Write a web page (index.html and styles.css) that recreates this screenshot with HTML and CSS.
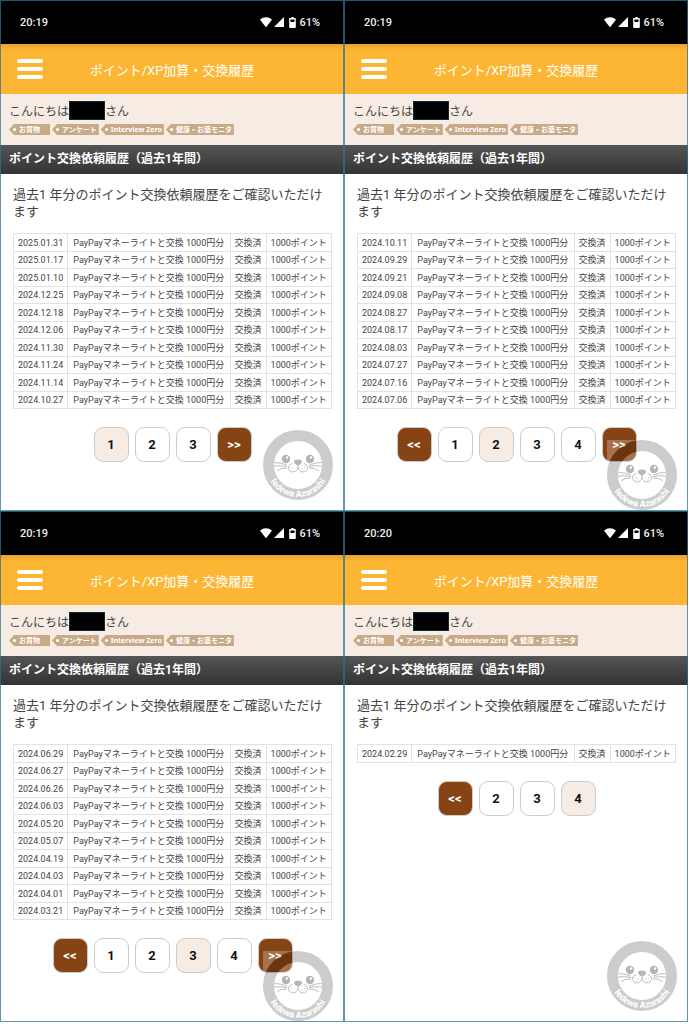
FILE: index.html
```html
<!DOCTYPE html>
<html lang="ja">
<head>
  <meta charset="UTF-8">
  <meta name="viewport" content="width=device-width, initial-scale=1.0">
  <title>ポイント/XP加算・交換履歴</title>
  <link rel="stylesheet" href="styles.css">
</head>
<body>
  <main class="screens" id="screens"></main>

  <template id="screenTemplate">
    <section class="screen">
      <div class="status">
        <span class="time"></span>
        <span class="indicators">
          <svg width="12" height="10" viewBox="0 0 12 10"><path d="M0 2.6C3.4-.7 8.600-.7 12 2.600L6.700 9.500Q6 10.300 5.300 9.500Z" fill="#fff"/></svg>
          <svg width="10" height="10" viewBox="0 0 10 10"><path d="M10 0V10H0Z" fill="#fff"/></svg>
          <svg class="battery" width="7" height="11" viewBox="0 0 6 10"><path fill-rule="evenodd" d="M2 0H4V1H5.400Q6 1 6 1.700V9.300Q6 10 5.300 10H.7Q0 10 0 9.300V1.700Q0 1 .6 1H2ZM1.200 2.300V4.600H4.800V2.300Z" fill="#fff"/></svg>
          <span>61%</span>
        </span>
      </div>
      <header class="appbar">
        <button class="menu" type="button" aria-label="メニュー"><i></i><i></i><i></i></button>
        <h1>ポイント/XP加算・交換履歴</h1>
      </header>
      <div class="user">
        <p class="greeting">こんにちは<span class="name"></span>さん</p>
        <ul class="tags">
          <li>お買物</li>
          <li>アンケート</li>
          <li>Interview Zero</li>
          <li>健康・お薬モニタ</li>
        </ul>
      </div>
      <h2>ポイント交換依頼履歴（過去1年間）</h2>
      <div class="content">
        <p class="lead">過去1 年分のポイント交換依頼履歴をご確認いただけます</p>
        <table class="history"><tbody></tbody></table>
        <nav class="pager"></nav>
      </div>
      <svg class="seal" viewBox="0 0 70 70">
        <path d="M0 0H70V70H0ZM35 0A35 35 0 0 0 35 70A35 35 0 0 0 35 0Z" fill="#fff" fill-opacity=".25"/>
        <circle cx="35" cy="35" r="24" fill="#fff" fill-opacity=".25"/>
        <circle cx="35" cy="35" r="29.500" fill="none" stroke="#000" stroke-opacity=".2" stroke-width="11"/>
        <g fill="#b5b5b5">
          <circle cx="23" cy="29" r="4.200"/>
          <circle cx="47" cy="29" r="4.200"/>
          <path d="M31 31.500Q31 29.500 35 29.500T39 31.500Q39 34 35 35.500Q31 34 31 31.500Z"/>
        </g>
        <g fill="#fff">
          <circle cx="24" cy="27.500" r="1.200"/>
          <circle cx="48" cy="27.500" r="1.200"/>
        </g>
        <g fill="none" stroke="#bdbdbd" stroke-linecap="round">
          <path d="M35 34V37.500M35 37.500C34.500 43.500 25 43.500 25.500 37Q26 34.500 29 33.500M35 37.500C35.500 43.500 45 43.500 44.500 37Q44 34.500 41 33.500"/>
          <path d="M23.500 35Q18 32.500 12 32.500M23.500 36.500Q18 35 11.500 36M23.500 38Q18 37.500 14.500 40.500M46.500 35Q52 32.500 58 32.500M46.500 36.500Q52 35 58.500 36M46.500 38Q52 37.500 55.500 40.500"/>
        </g>
        <g fill="#c4c4c4">
          <circle cx="28.500" cy="37.500" r=".6"/><circle cx="31" cy="38.500" r=".6"/><circle cx="29" cy="40" r=".6"/>
          <circle cx="41.500" cy="37.500" r=".6"/><circle cx="39" cy="38.500" r=".6"/><circle cx="41" cy="40" r=".6"/>
        </g>
        <path id="sealArc" d="M3 35A32 32 0 0 0 67 35" fill="none"/>
        <text><textPath href="#sealArc" startOffset="50%" text-anchor="middle">Iedewa Azarashi</textPath></text>
      </svg>
    </section>
  </template>

  <script>
    const screens = [
      { time: '20:19', current: '1', pages: ['1','2','3','>>'],
        dates: ['2025.01.31','2025.01.17','2025.01.10','2024.12.25','2024.12.18','2024.12.06','2024.11.30','2024.11.24','2024.11.14','2024.10.27'] },
      { time: '20:19', current: '2', pages: ['<<','1','2','3','4','>>'], seal: 'low',
        dates: ['2024.10.11','2024.09.29','2024.09.21','2024.09.08','2024.08.27','2024.08.17','2024.08.03','2024.07.27','2024.07.16','2024.07.06'] },
      { time: '20:19', current: '3', pages: ['<<','1','2','3','4','>>'], seal: 'low',
        dates: ['2024.06.29','2024.06.27','2024.06.26','2024.06.03','2024.05.20','2024.05.07','2024.04.19','2024.04.03','2024.04.01','2024.03.21'] },
      { time: '20:20', current: '4', pages: ['<<','2','3','4'],
        dates: ['2024.02.29'] }
    ];
    const root = document.getElementById('screens');
    const template = document.getElementById('screenTemplate');

    screens.forEach((s, i) => {
      const node = template.content.cloneNode(true);
      node.querySelector('.time').textContent = s.time;

      const body = node.querySelector('tbody');
      s.dates.forEach(date => {
        const row = body.insertRow();
        [date, 'PayPayマネーライトと交換 1000円分', '交換済', '1000ポイント'].forEach(t => { row.insertCell().textContent = t; });
      });

      const pager = node.querySelector('.pager');
      s.pages.forEach(p => {
        const a = document.createElement('a');
        a.href = '#'; a.textContent = p;
        if (p === s.current) a.classList.add('current');
        if (p === '<<' || p === '>>') a.classList.add('jump');
        pager.appendChild(a);
      });

      if (s.seal) node.querySelector('.seal').classList.add(s.seal);
      node.querySelector('#sealArc').id = 'sealArc' + i;
      node.querySelector('textPath').setAttribute('href', '#sealArc' + i);
      root.appendChild(node);
    });
  </script>
</body>
</html>
```

FILE: styles.css
```css
:root {
  --orange: #fdb633;
  --cream: #f7ece3;
  --brown: #864313;
  --tag: #c8aa88;
  --frame: rgba(45,115,145,0.75);
}
* { box-sizing: border-box; margin: 0; padding: 0; }
body { background: #fff; color: #444;
  font-family: Roboto, "Noto Sans CJK JP", sans-serif;
}
.screens { min-height: 100vh; padding: 0 1px 2px 0;
  display: grid; grid-template-columns: 1fr 1fr; grid-auto-rows: 1fr;
}
.screen { position: relative; background: #fff; overflow: hidden; }
.screen::after { content: ""; position: absolute; inset: 0;
  border: 1px solid var(--frame); pointer-events: none;
}

.status { height: 44px; padding: 0 24px 0 20px; background: #000; color: #eee;
  display: flex; align-items: center; justify-content: space-between;
  font-size: 11px; font-weight: 500;
}
.indicators { display: flex; align-items: center; gap: 2px; }
.battery { margin: 0 1px 0 3px; }

.appbar { height: 50px; padding: 0 17px;
  background: linear-gradient(#e5a42f, var(--orange) 6px);
  display: grid; grid-template-columns: 1fr auto 1fr; align-items: center;
}
.appbar h1 { color: #fff; font-size: 13px; font-weight: 400; }
.menu { width: 26px; background: none; border: none; cursor: pointer;
  display: flex; flex-direction: column; gap: 4px;
}
.menu i { height: 4px; width: 100%; border-radius: 2px; background: #fff; }

.user { height: 51px; padding: 7px 9px; background: var(--cream); }
.greeting { display: flex; align-items: center; height: 18px; font-size: 12px; }
.name { width: 36px; height: 19px; background: #000; border: 1px solid #0b2b3b; }
.tags { display: flex; gap: 2px; margin-top: 5px; list-style: none; }
.tags li { position: relative; min-width: 41px; height: 11px; padding: 0 2px 0 10px;
  background: var(--tag); color: #fff;
  font-family: "Noto Sans", "Noto Sans CJK JP", sans-serif;
  font-size: 7px; line-height: 11px; font-weight: bold; white-space: nowrap;
  clip-path: polygon(0 50%, 5px 0, 100% 0, 100% 100%, 5px 100%);
}
.tags li::before { content: ""; position: absolute; left: 4px; top: 4px;
  width: 3px; height: 3px; border-radius: 50%; background: #fff;
}

h2 { height: 29px; padding: 0 9px; color: #fff;
  background: linear-gradient(#555, #333);
  font-size: 12px; line-height: 28px; font-weight: bold;
}

.content { padding: 12px 12px 0 13px; }
.lead { font-size: 13px; line-height: 17px; }
.history { width: 100%; margin-top: 13px; border-collapse: collapse;
  font-size: 9px; line-height: 16px; white-space: nowrap;
}
.history td { height: 18px; padding: 0 4px; border: 1px solid #e2e2e2; }
.history tr:nth-child(even) td { height: 17px; }
.history td:nth-child(2) { padding: 0 5px; }

.pager { display: flex; justify-content: center; gap: 6px; margin-top: 18px; }
.pager a { width: 35px; height: 35px; border: 1px solid #ccc; border-radius: 9px;
  background: #fff; color: #111; text-decoration: none;
  font-size: 13px; line-height: 33px; font-weight: bold; text-align: center;
}
.pager .current { background: var(--cream); }
.pager .jump { background: var(--brown); color: #fff; }

.seal { position: absolute; right: 11px; bottom: 11px; width: 70px; height: 70px; }
.seal.low { bottom: 1px; }
.seal text { fill: #fff; font-size: 9px; font-weight: bold; }
```
